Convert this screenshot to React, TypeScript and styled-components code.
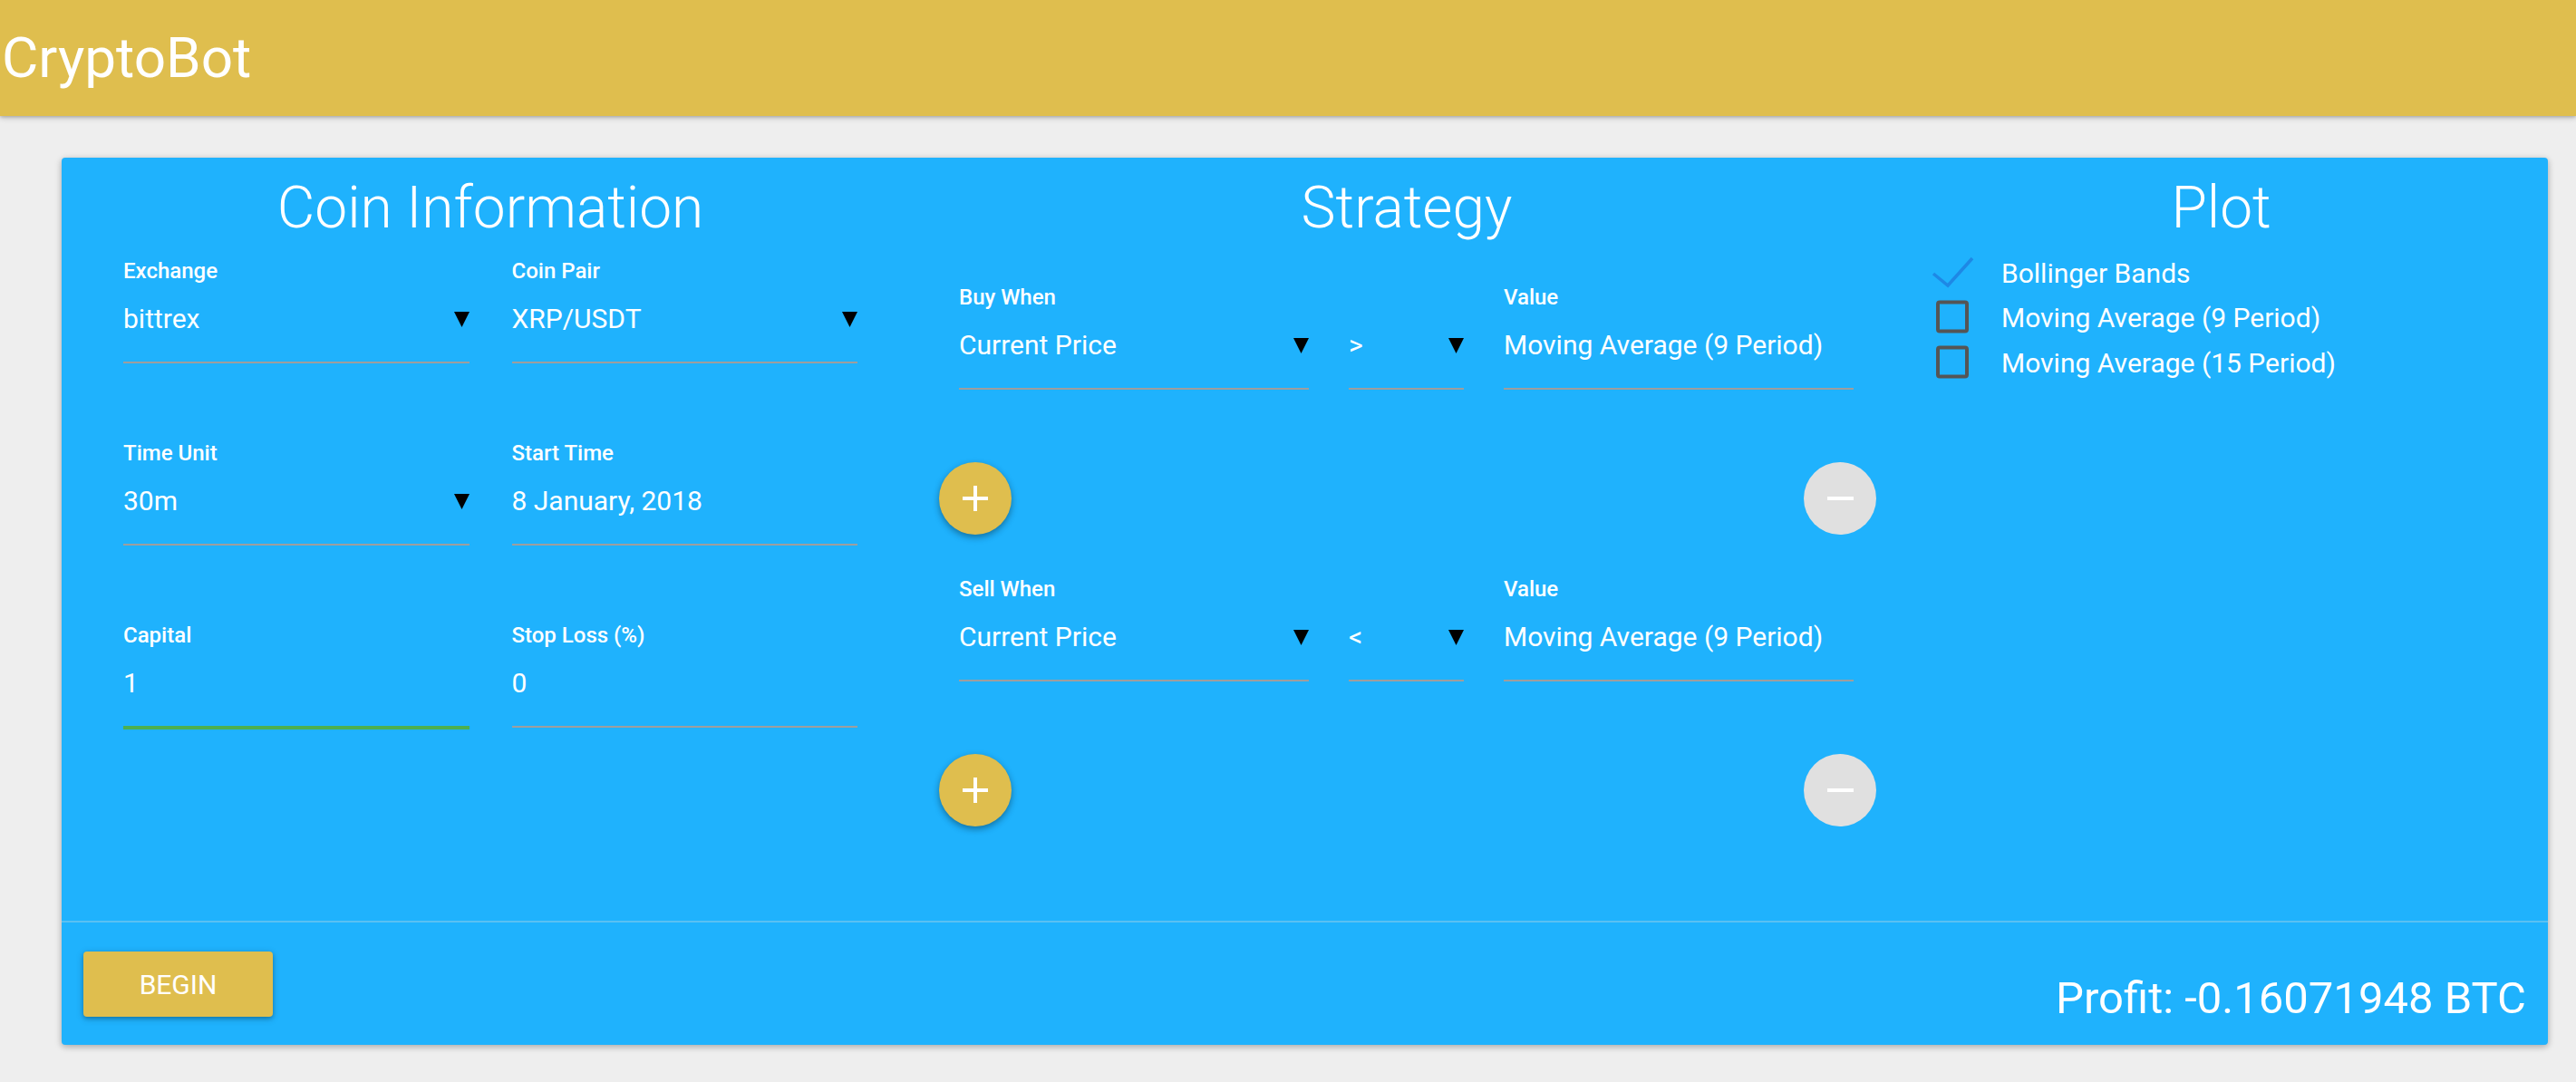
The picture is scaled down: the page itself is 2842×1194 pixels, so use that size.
import React from 'react';
import styled, { createGlobalStyle } from 'styled-components';

const colors = {
  yellow: '#dfbe4e',
  blue: '#1fb2fd',
  page: '#eeeeee',
  underline: '#9e9e9e',
  green: '#4caf50',
  disabled: '#e0e0e0',
};

const GlobalStyle = createGlobalStyle`
  html, body {
    margin: 0;
    padding: 0;
    background: ${colors.page};
  }
  body {
    font-family: Roboto, "Liberation Sans", Arial, sans-serif;
    color: #fff;
  }
`;

const AppBar = styled.header`
  height: 128px;
  background: ${colors.yellow};
  box-shadow: 0 2px 6px rgba(0, 0, 0, 0.22), 0 1px 3px rgba(0, 0, 0, 0.14);
  padding-left: 2px;
`;

const AppTitle = styled.h1`
  margin: 0;
  font-size: 62px;
  font-weight: 400;
  line-height: 128px;
  color: #fff;
`;

const Card = styled.section`
  margin: 46px 31px 41px 68px;
  background: ${colors.blue};
  border-radius: 4px;
  box-shadow: 0 2px 8px rgba(0, 0, 0, 0.16), 0 2px 6px rgba(0, 0, 0, 0.16);
`;

const CardBody = styled.div`
  display: grid;
  grid-template-columns: 946px 1076px 1fr;
  padding: 18px 0 104px;
`;

const Column = styled.div<{ $pad: string }>`
  display: flex;
  flex-direction: column;
  padding: ${({ $pad }) => $pad};
`;

const SectionTitle = styled.h2`
  margin: 0;
  font-size: 64px;
  font-weight: 300;
  line-height: 76px;
  text-align: center;
`;

const CoinGrid = styled.div`
  display: grid;
  grid-template-columns: 1fr 1fr;
  column-gap: 47px;
  row-gap: 85px;
  margin-top: 17px;
  align-items: start;
`;

const FieldWrap = styled.div`
  display: flex;
  flex-direction: column;
`;

const Label = styled.label`
  font-size: 24px;
  font-weight: 500;
  line-height: 28px;
  white-space: nowrap;
`;

const ValueRow = styled.div`
  display: flex;
  align-items: center;
  justify-content: space-between;
  margin-top: 21px;
  padding-bottom: 29px;
  height: 36px;
`;

const Value = styled.span`
  font-size: 30px;
  line-height: 36px;
  white-space: nowrap;
`;

const Underline = styled.div<{ $focused?: boolean }>`
  height: ${({ $focused }) => ($focused ? '4px' : '2px')};
  background: ${({ $focused }) => ($focused ? colors.green : colors.underline)};
`;

const Arrow = () => (
  <svg width="17" height="17" viewBox="0 0 17 17">
    <polygon points="0,0 17,0 8.5,17" fill="#000" />
  </svg>
);

type FieldProps = {
  label?: string;
  value: string;
  select?: boolean;
  focused?: boolean;
};

const Field: React.FC<FieldProps> = ({ label, value, select, focused }) => (
  <FieldWrap>
    <Label>{label ?? '\u00a0'}</Label>
    <ValueRow>
      <Value>{value}</Value>
      {select && <Arrow />}
    </ValueRow>
    <Underline $focused={focused} />
  </FieldWrap>
);

const RuleRow = styled.div<{ $top: number }>`
  display: grid;
  grid-template-columns: 386px 127px 386px;
  column-gap: 44px;
  margin-top: ${({ $top }) => $top}px;
`;

const FabRow = styled.div`
  display: flex;
  justify-content: space-between;
  margin: 80px -24px 0 -22px;
`;

const Fab = styled.button<{ $disabled?: boolean }>`
  width: 80px;
  height: 80px;
  border: none;
  border-radius: 50%;
  padding: 0;
  display: flex;
  align-items: center;
  justify-content: center;
  background: ${({ $disabled }) => ($disabled ? colors.disabled : colors.yellow)};
  box-shadow: ${({ $disabled }) =>
    $disabled ? 'none' : '0 3px 10px rgba(0,0,0,0.16), 0 3px 6px rgba(0,0,0,0.23)'};
`;

const PlusIcon = () => (
  <svg width="28" height="28" viewBox="0 0 28 28">
    <rect x="0" y="12" width="28" height="4" fill="#fff" />
    <rect x="12" y="0" width="4" height="28" fill="#fff" />
  </svg>
);

const MinusIcon = () => (
  <svg width="29" height="4" viewBox="0 0 29 4">
    <rect x="0" y="0" width="29" height="4" fill="#fff" />
  </svg>
);

const CheckList = styled.div`
  margin-top: 9px;
  padding-left: 40px;
  display: flex;
  flex-direction: column;
`;

const CheckRow = styled.div`
  display: flex;
  align-items: center;
  gap: 30px;
  height: 49.5px;
`;

const CheckText = styled.span`
  font-size: 30px;
  line-height: 36px;
  white-space: nowrap;
`;

const CheckIcon: React.FC<{ checked: boolean }> = ({ checked }) => (
  <svg width="48" height="48" viewBox="0 0 48 48">
    {checked ? (
      <polyline
        points="3,24 19,37 46,7"
        fill="none"
        stroke="#1e88e5"
        strokeWidth="3.5"
      />
    ) : (
      <rect
        x="8"
        y="6.5"
        width="32"
        height="32"
        rx="2"
        fill="none"
        stroke="#555"
        strokeWidth="4"
      />
    )}
  </svg>
);

const CardFooter = styled.div`
  display: flex;
  justify-content: space-between;
  align-items: flex-end;
  border-top: 2px solid #5ac0f2;
  padding: 32px 24px 23px;
`;

const BeginButton = styled.button`
  width: 209px;
  height: 72px;
  margin-bottom: 8px;
  border: none;
  border-radius: 4px;
  background: ${colors.yellow};
  color: #fff;
  font-family: inherit;
  font-size: 30px;
  font-weight: 400;
  text-transform: uppercase;
  box-shadow: 0 2px 8px rgba(0, 0, 0, 0.2), 0 2px 4px rgba(0, 0, 0, 0.2);
`;

const Profit = styled.div`
  font-size: 49px;
  line-height: 56px;
  white-space: nowrap;
`;

const plots = [
  { name: 'Bollinger Bands', checked: true },
  { name: 'Moving Average (9 Period)', checked: false },
  { name: 'Moving Average (15 Period)', checked: false },
];

const App: React.FC = () => (
  <>
    <GlobalStyle />
    <AppBar>
      <AppTitle>CryptoBot</AppTitle>
    </AppBar>
    <Card>
      <CardBody>
        <Column $pad="0 68px">
          <SectionTitle>Coin Information</SectionTitle>
          <CoinGrid>
            <Field label="Exchange" value="bittrex" select />
            <Field label="Coin Pair" value="XRP/USDT" select />
            <Field label="Time Unit" value="30m" select />
            <Field label="Start Time" value="8 January, 2018" />
            <Field label="Capital" value="1" focused />
            <Field label="Stop Loss (%)" value="0" />
          </CoinGrid>
        </Column>

        <Column $pad="0 44px">
          <SectionTitle>Strategy</SectionTitle>
          <RuleRow $top={46}>
            <Field label="Buy When" value="Current Price" select />
            <Field value=">" select />
            <Field label="Value" value="Moving Average (9 Period)" />
          </RuleRow>
          <FabRow>
            <Fab><PlusIcon /></Fab>
            <Fab $disabled><MinusIcon /></Fab>
          </FabRow>
          <RuleRow $top={46}>
            <Field label="Sell When" value="Current Price" select />
            <Field value="<" select />
            <Field label="Value" value="Moving Average (9 Period)" />
          </RuleRow>
          <FabRow>
            <Fab><PlusIcon /></Fab>
            <Fab $disabled><MinusIcon /></Fab>
          </FabRow>
        </Column>

        <Column $pad="0">
          <SectionTitle>Plot</SectionTitle>
          <CheckList>
            {plots.map((p) => (
              <CheckRow key={p.name}>
                <CheckIcon checked={p.checked} />
                <CheckText>{p.name}</CheckText>
              </CheckRow>
            ))}
          </CheckList>
        </Column>
      </CardBody>
      <CardFooter>
        <BeginButton>Begin</BeginButton>
        <Profit>Profit: -0.16071948 BTC</Profit>
      </CardFooter>
    </Card>
  </>
);

export default App;
